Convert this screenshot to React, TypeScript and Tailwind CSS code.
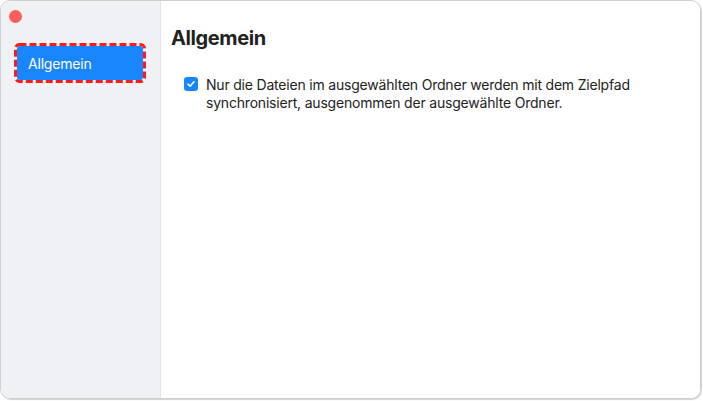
import React from 'react';

function CheckBox() {
  return (
    <span className="flex h-[14px] w-[14px] shrink-0 items-center justify-center rounded-[3px] bg-[#1a86fd]">
      <svg width="10" height="10" viewBox="0 0 10 10" fill="none">
        <path d="M2 5.2 L4.1 7.2 L8 2.8" stroke="white" strokeWidth="1.6" strokeLinecap="round" strokeLinejoin="round" />
      </svg>
    </span>
  );
}

function DashedFrame() {
  return (
    <svg className="pointer-events-none absolute inset-0" width="132" height="40" viewBox="0 0 132 40" fill="none">
      <rect x="1.5" y="1.5" width="129" height="37" rx="4" stroke="#ff1a1a" strokeWidth="3" strokeDasharray="7 3" />
    </svg>
  );
}

export default function App() {
  return (
    <div className="h-[401px] w-[703px] bg-white" style={{ fontFamily: 'Inter, "Liberation Sans", sans-serif' }}>
      <div className="flex h-[399px] w-[701px] overflow-hidden rounded-[10px] border border-[#cfcfcf] shadow-[1px_1px_1px_rgba(0,0,0,0.18)]">
        {/* sidebar */}
        <div className="flex w-[160px] shrink-0 flex-col border-r border-[#e3e3e6] bg-[#f0f1f5]">
          <div className="pl-[8px] pt-[9px]">
            <span className="block h-[13px] w-[13px] rounded-full bg-[#fe5f58]" />
          </div>
          <div className="relative ml-[13px] mt-[20px] h-[40px] w-[132px] p-[3px]">
            <div className="flex h-[34px] items-center rounded-[3px] bg-[#1a86fd] pl-[11px] text-[14px] tracking-[-0.2px] text-white">
              Allgemein
            </div>
            <DashedFrame />
          </div>
        </div>
        {/* content */}
        <div className="flex-1 bg-white pl-[10px] pt-[25px]">
          <h1 className="text-[20px] font-bold leading-[24px] tracking-[-0.4px] text-[#222]">Allgemein</h1>
          <div className="mt-[26px] flex gap-[8px] pl-[13px]">
            <div className="pt-[1px]">
              <CheckBox />
            </div>
            <p className="text-[14px] leading-[18px] tracking-[-0.2px] text-[#222]">
              Nur die Dateien im ausgewählten Ordner werden mit dem Zielpfad
              <br />
              synchronisiert, ausgenommen der ausgewählte Ordner.
            </p>
          </div>
        </div>
      </div>
    </div>
  );
}
